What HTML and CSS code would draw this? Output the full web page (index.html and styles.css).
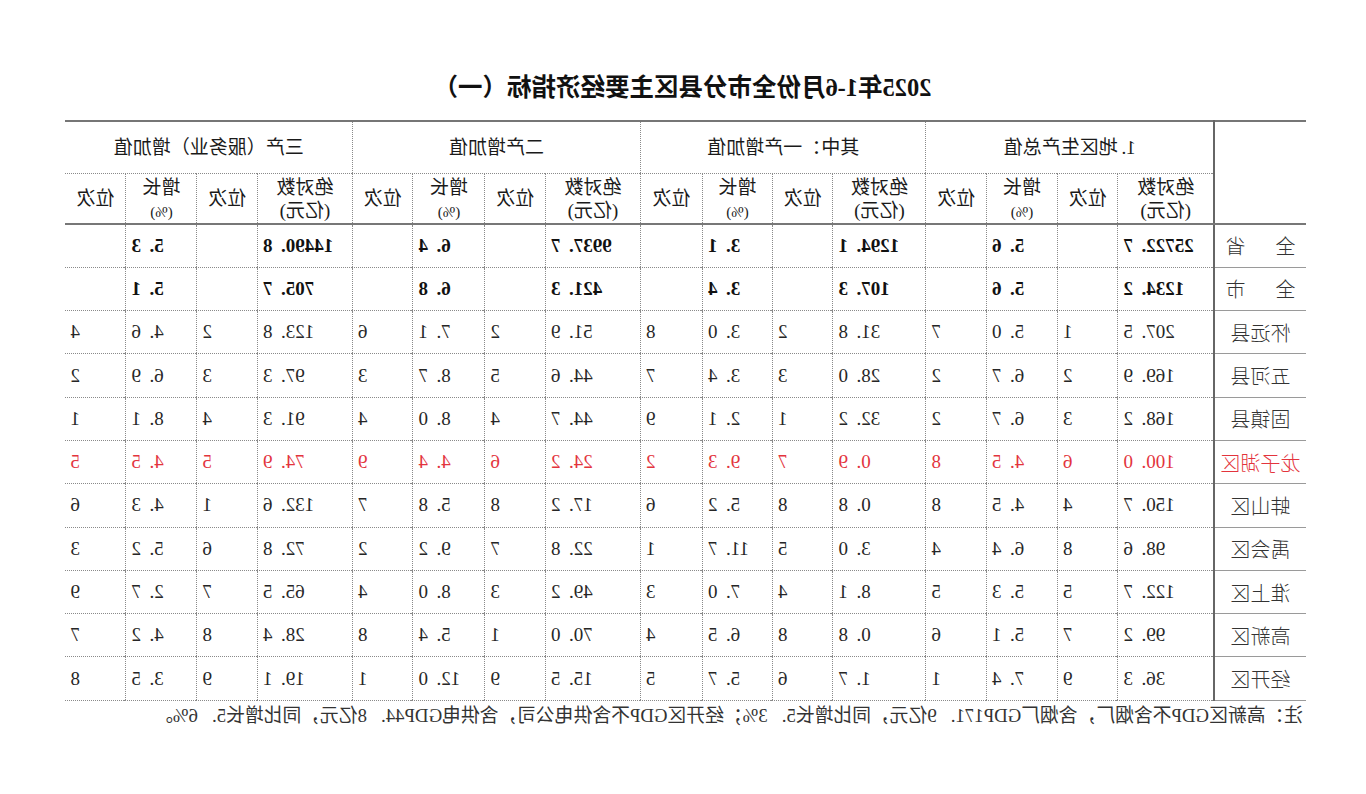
FILE: index.html
```html
<!DOCTYPE html>
<html lang="zh-CN">
<head>
<meta charset="utf-8">
<title>2025年1-6月份全市分县区主要经济指标（一）</title>
<link rel="stylesheet" href="styles.css">
</head>
<body>
<div class="mirror">
  <div class="page">
    <h1 class="title">2025年1-6月份全市分县区主要经济指标（一）</h1>
    <table class="grid">
      <colgroup>
        <col class="c-name">
        <col class="c-abs1"><col class="c-rk"><col class="c-gr"><col class="c-rk">
        <col class="c-abs2"><col class="c-rk"><col class="c-gr2"><col class="c-rk2">
        <col class="c-abs"><col class="c-rk"><col class="c-gr3"><col class="c-rk">
        <col class="c-abs"><col class="c-rk"><col class="c-gr"><col class="c-rk">
      </colgroup>
      <thead>
        <tr class="hrow1">
          <th class="name" rowspan="2"></th>
          <th colspan="4">1.&thinsp;地区生产总值</th>
          <th colspan="4">其中：一产增加值</th>
          <th colspan="4">二产增加值</th>
          <th colspan="4">三产（服务业）增加值</th>
        </tr>
        <tr class="hrow2">
          <th>绝对数<br>(亿元)</th><th>位次</th><th>增长<br><span class="pct">(%)</span></th><th>位次</th>
          <th>绝对数<br>(亿元)</th><th>位次</th><th>增长<br><span class="pct">(%)</span></th><th>位次</th>
          <th>绝对数<br>(亿元)</th><th>位次</th><th>增长<br><span class="pct">(%)</span></th><th>位次</th>
          <th>绝对数<br>(亿元)</th><th>位次</th><th>增长<br><span class="pct">(%)</span></th><th>位次</th>
        </tr>
      </thead>
      <tbody>
        <tr class="total">
          <th class="name"><span class="spread">全　省</span></th>
          <td>25722. 7</td><td></td><td>5. 6</td><td></td>
          <td>1294. 1</td><td></td><td>3. 1</td><td></td>
          <td>9937. 7</td><td></td><td>6. 4</td><td></td>
          <td>14490. 8</td><td></td><td>5. 3</td><td></td>
        </tr>
        <tr class="total">
          <th class="name"><span class="spread">全　市</span></th>
          <td>1234. 2</td><td></td><td>5. 6</td><td></td>
          <td>107. 3</td><td></td><td>3. 4</td><td></td>
          <td>421. 3</td><td></td><td>6. 8</td><td></td>
          <td>705. 7</td><td></td><td>5. 1</td><td></td>
        </tr>
        <tr>
          <th class="name">怀远县</th>
          <td>207. 5</td><td>1</td><td>5. 0</td><td>7</td>
          <td>31. 8</td><td>2</td><td>3. 0</td><td>8</td>
          <td>51. 9</td><td>2</td><td>7. 1</td><td>6</td>
          <td>123. 8</td><td>2</td><td>4. 6</td><td>4</td>
        </tr>
        <tr>
          <th class="name">五河县</th>
          <td>169. 9</td><td>2</td><td>6. 7</td><td>2</td>
          <td>28. 0</td><td>3</td><td>3. 4</td><td>7</td>
          <td>44. 6</td><td>5</td><td>8. 7</td><td>3</td>
          <td>97. 3</td><td>3</td><td>6. 9</td><td>2</td>
        </tr>
        <tr>
          <th class="name">固镇县</th>
          <td>168. 2</td><td>3</td><td>6. 7</td><td>2</td>
          <td>32. 2</td><td>1</td><td>2. 1</td><td>9</td>
          <td>44. 7</td><td>4</td><td>8. 0</td><td>4</td>
          <td>91. 3</td><td>4</td><td>8. 1</td><td>1</td>
        </tr>
        <tr class="hl">
          <th class="name">龙子湖区</th>
          <td>100. 0</td><td>6</td><td>4. 5</td><td>8</td>
          <td>0. 9</td><td>7</td><td>9. 3</td><td>2</td>
          <td>24. 2</td><td>6</td><td>4. 4</td><td>9</td>
          <td>74. 9</td><td>5</td><td>4. 5</td><td>5</td>
        </tr>
        <tr>
          <th class="name">蚌山区</th>
          <td>150. 7</td><td>4</td><td>4. 5</td><td>8</td>
          <td>0. 8</td><td>8</td><td>5. 2</td><td>6</td>
          <td>17. 2</td><td>8</td><td>5. 8</td><td>7</td>
          <td>132. 6</td><td>1</td><td>4. 3</td><td>6</td>
        </tr>
        <tr>
          <th class="name">禹会区</th>
          <td>98. 6</td><td>8</td><td>6. 4</td><td>4</td>
          <td>3. 0</td><td>5</td><td>11. 7</td><td>1</td>
          <td>22. 8</td><td>7</td><td>9. 2</td><td>2</td>
          <td>72. 8</td><td>6</td><td>5. 2</td><td>3</td>
        </tr>
        <tr>
          <th class="name">淮上区</th>
          <td>122. 7</td><td>5</td><td>5. 3</td><td>5</td>
          <td>8. 1</td><td>4</td><td>7. 0</td><td>3</td>
          <td>49. 2</td><td>3</td><td>8. 0</td><td>4</td>
          <td>65. 5</td><td>7</td><td>2. 7</td><td>9</td>
        </tr>
        <tr>
          <th class="name">高新区</th>
          <td>99. 2</td><td>7</td><td>5. 1</td><td>6</td>
          <td>0. 8</td><td>8</td><td>6. 5</td><td>4</td>
          <td>70. 0</td><td>1</td><td>5. 4</td><td>8</td>
          <td>28. 4</td><td>8</td><td>4. 2</td><td>7</td>
        </tr>
        <tr class="last">
          <th class="name">经开区</th>
          <td>36. 3</td><td>9</td><td>7. 4</td><td>1</td>
          <td>1. 7</td><td>6</td><td>5. 7</td><td>5</td>
          <td>15. 5</td><td>9</td><td>12. 0</td><td>1</td>
          <td>19. 1</td><td>9</td><td>3. 5</td><td>8</td>
        </tr>
      </tbody>
    </table>
    <p class="note">注：高新区GDP不含烟厂，含烟厂GDP171. 9亿元，同比增长5. 3%；经开区GDP不含供电公司，含供电GDP44. 8亿元，同比增长5. 6%。</p>
  </div>
</div>
</body>
</html>
```

FILE: styles.css
```css
html, body {
  margin: 0;
  padding: 0;
  background: #ffffff;
}

body {
  width: 1366px;
  height: 794px;
  overflow: hidden;
  font-family: "Liberation Serif", "Noto Sans CJK SC", serif;
  color: #1e1e1e;
}

.mirror {
  width: 1366px;
  height: 794px;
  transform: scaleX(-1);
  transform-origin: 50% 50%;
}

.page {
  width: 1240px;
  padding: 74px 0 0 60px;
}

.title {
  margin: 0 0 18px;
  padding-left: 7px;
  font-family: "Liberation Serif", "Noto Sans CJK SC", serif;
  font-weight: bold;
  font-size: 24.5px;
  line-height: 28px;
  text-align: center;
  color: #111111;
}

.grid {
  width: 1240px;
  table-layout: fixed;
  border-collapse: collapse;
  font-family: "Liberation Serif", "Noto Sans CJK SC", serif;
  font-size: 19px;
  color: #262626;
}

.c-name { width: 92px; }
.c-abs1 { width: 96px; }
.c-abs2 { width: 93px; }
.c-abs { width: 95px; }
.c-rk { width: 60.5px; }
.c-rk2 { width: 62px; }
.c-gr { width: 71px; }
.c-gr2 { width: 70px; }
.c-gr3 { width: 72px; }

.grid th,
.grid td {
  padding: 0;
  font-weight: normal;
}

/* header */
.hrow1 th {
  height: 51px;
  border-top: 2px solid #767676;
  border-bottom: 1px dotted #8a8a8a;
  border-left: 1px dotted #8a8a8a;
  text-align: center;
  font-size: 19px;
  line-height: 24px;
  color: #1a1a1a;
}

.hrow1 th.name {
  border-left: none;
  border-bottom: 2px solid #777777;
  border-right: 2px solid #666666;
}

.hrow2 th {
  height: 49px;
  border-left: 1px dotted #8a8a8a;
  border-bottom: 2px solid #777777;
  text-align: center;
  font-size: 19px;
  line-height: 23px;
  color: #1a1a1a;
}

.pct {
  font-size: 15px;
  line-height: 20px;
}

/* body */
.grid tbody tr {
  height: 43.3px;
}

.grid tbody td {
  border-left: 1px dotted #8a8a8a;
  border-bottom: 1px dotted #8a8a8a;
  text-align: right;
  padding-right: 5px;
  white-space: pre;
  word-spacing: 0.2em;
  vertical-align: middle;
}

.grid tbody th.name {
  border-right: 2px solid #666666;
  border-bottom: 1px solid #9a9a9a;
  text-align: center;
  font-size: 20px;
  font-weight: 300;
  white-space: nowrap;
  color: #333333;
}

.spread {
  letter-spacing: 5px;
  padding-left: 5px;
}

.total td {
  font-weight: bold;
  color: #111111;
}

.hl td,
.hl th.name {
  color: #e3343d !important;
}

.last td,
.last th.name {
  border-bottom: 2px solid #5a5a5a;
}

.note {
  margin: 3px 0 0 3px;
  white-space: pre;
  word-spacing: 0.5em;
  font-size: 18.8px;
  line-height: 24px;
  color: #333333;
}
```
